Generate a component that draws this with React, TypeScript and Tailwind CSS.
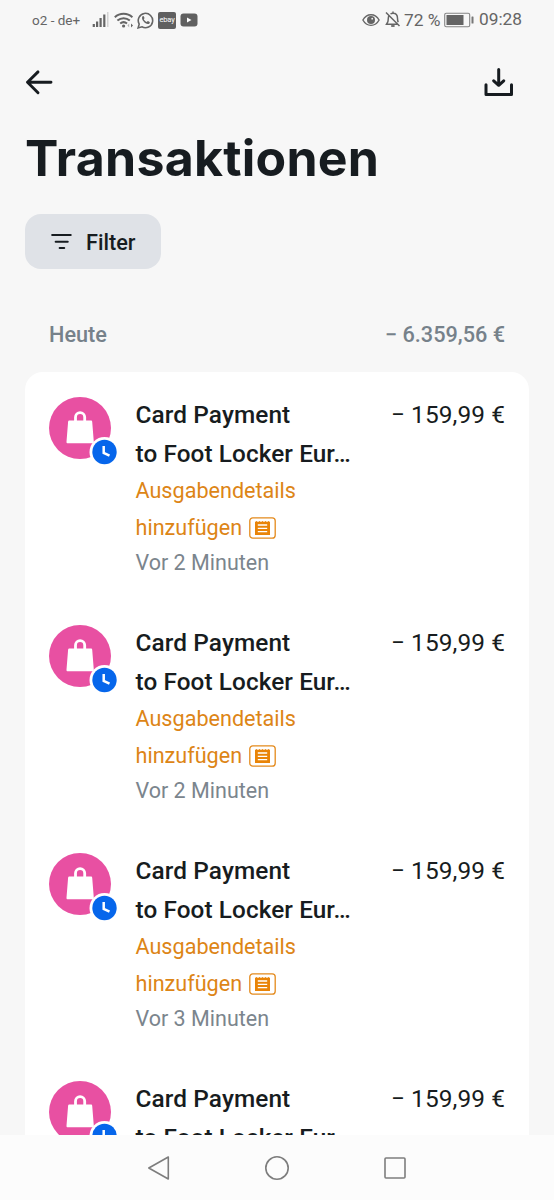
const transactions = [
  { id: 1, merchant: 'Foot Locker Eur…', amount: '159,99', time: 'Vor 2 Minuten' },
  { id: 2, merchant: 'Foot Locker Eur…', amount: '159,99', time: 'Vor 2 Minuten' },
  { id: 3, merchant: 'Foot Locker Eur…', amount: '159,99', time: 'Vor 3 Minuten' },
  { id: 4, merchant: 'Foot Locker Eur…', amount: '159,99', time: 'Vor 3 Minuten' }
];

function StatusBar() {
  return (
    <div className="flex h-10 shrink-0 items-center justify-between pl-8 pr-8 text-[#656565]">
      <div className="flex items-center">
        <span className="w-[60px] whitespace-nowrap text-[13.5px]">o2 - de+</span>
        {/* Signal */}
        <svg width="18" height="16" viewBox="0 0 18 16" fill="currentColor">
          <rect x="0.7" y="12" width="2.2" height="3" />
          <rect x="4" y="9.5" width="2.2" height="5.5" />
          <rect x="7.5" y="6" width="2.2" height="9" />
          <rect x="11.2" y="2.5" width="2.2" height="12.5" />
          <rect x="15" y="0" width="1.5" height="15" fill="#d2d2d2" />
        </svg>
        {/* Wifi */}
        <svg className="ml-1" width="20" height="17" viewBox="0 0 20 17" fill="none" stroke="currentColor" strokeWidth="2">
          <path d="M.8 5.2C5.8.6 13.4.6 18.4 5.2" />
          <path d="M3.4 8.6c3.6-3.2 8.8-3.2 12.4 0" />
          <path d="M6.2 11.6c2-1.7 4.8-1.7 6.8 0" />
          <circle cx="9.6" cy="14" r="1.6" fill="currentColor" stroke="none" />
          <path d="M15.2 11.6v4l-1.8-2z" fill="#b5b5b5" stroke="none" />
          <path d="M17 11.6v4l2-2z" fill="currentColor" stroke="none" />
        </svg>
        {/* WhatsApp */}
        <svg className="ml-[3px]" width="17" height="17" viewBox="0 0 17 17" fill="none" stroke="currentColor" strokeWidth="1.6">
          <path d="M1.1 15.9l1.1-3.8A7.2 7.2 0 1 1 4.9 14.8z" />
          <path d="M5.3 4.6c.6-.8 1.3-.7 1.6 0l.6 1.5c.1.5-.8.9-.6 1.4.6 1.1 1.5 1.9 2.7 2.4.5.2.8-1 1.4-.8l1.6.8c.5.3.2 1.6-.9 2-2.6 1.2-8-4-6.4-7.3z" fill="currentColor" stroke="none" />
        </svg>
        <span className="ml-1 flex h-[17px] w-[18px] items-center justify-center rounded-[2px] bg-[#606060] text-[7.5px] leading-none tracking-[-0.2px] text-white">ebay</span>
        {/* YouTube */}
        <svg className="ml-1" width="18" height="14" viewBox="0 0 18 14">
          <rect x="0.5" y="0.5" width="17" height="13" rx="3" fill="#606060" />
          <path d="M7 4.5v5l4.5-2.5z" fill="#fff" />
        </svg>
      </div>
      <div className="flex items-center">
        {/* Eye */}
        <svg width="18" height="14" viewBox="0 0 18 14" fill="none" stroke="currentColor" strokeWidth="1.4">
          <path d="M.9 7C4.7-.1 13.3-.1 17.1 7 13.3 14.1 4.7 14.1.9 7z" />
          <circle cx="9" cy="7" r="4" fill="currentColor" stroke="none" />
          <circle cx="10.2" cy="5.7" r="0.9" fill="#f7f7f7" stroke="none" />
        </svg>
        {/* Muted bell */}
        <svg className="ml-[5px]" width="16" height="17" viewBox="0 0 16 17" fill="none" stroke="currentColor" strokeWidth="1.5">
          <path d="M1 1.5l13.5 13.5M3.8 4.8C3 6.5 3.4 9.500 2.800 11L1.500 13.200h11M5.500 2.900C6.300 2.500 7 2.300 8 2.300c3 0 4.500 2.200 4.500 5 0 1.700.2 2.900.7 4M8 .6v1.700" />
          <path d="M6.2 15h3.4" strokeWidth="1.8" />
        </svg>
        <span className="ml-[3px] w-[40px] whitespace-nowrap text-[17.4px]">72 %</span>
        {/* Battery */}
        <svg width="30" height="16" viewBox="0 0 30 16">
          <rect x="0.7" y="1.2" width="25" height="13.6" rx="1.5" fill="none" stroke="#858585" strokeWidth="1.1" />
          <rect x="2.5" y="3" width="17" height="10" fill="#646464" />
          <rect x="27.5" y="4.5" width="2" height="7" rx="0.5" fill="#777" />
        </svg>
        <span className="ml-[5px] whitespace-nowrap text-[17.3px]">09:28</span>
      </div>
    </div>
  );
}

function CategoryIcon() {
  return (
    <svg width="70" height="70" viewBox="0 0 70 70">
      <circle cx="31" cy="31" r="31" fill="#e850a2" />
      <path d="M20.5 23.5h21.4c.8 0 1.2.4 1.3 1.2l1.6 20.1c.1 1-.4 1.500-1.400 1.500H18.900c-1 0-1.500-.5-1.400-1.500l1.600-20.100c.1-.8.600-1.200 1.400-1.200z" fill="#fff" />
      <path d="M26.5 25v-4.8a4.6 4.6 0 0 1 9.2 0V25" fill="none" stroke="#fff" strokeWidth="2.8" />
      <circle cx="55.5" cy="55" r="15" fill="#fff" />
      <circle cx="55.5" cy="55" r="12.2" fill="#0666eb" />
      <path d="M54.7 49v7l5.8 2.7" fill="none" stroke="#fff" strokeWidth="2.5" />
    </svg>
  );
}

function ReceiptIcon() {
  return (
    <svg className="ml-[7px]" width="27" height="22" viewBox="0 0 27 22">
      <rect x="0.8" y="0.8" width="25.4" height="20.4" rx="3" fill="none" stroke="#e48a1c" strokeWidth="1.3" />
      <path d="M6 5l1.5-1L9 5l1.5-1L12 5l1.5-1L15 5l1.5-1L18 5l1.5-1L21 5v13H6z" fill="#e98407" />
      <path d="M8.8 8h9.4M8.8 11.3h9.4M8.8 14.6h9.4" stroke="#fff" strokeWidth="1.3" />
    </svg>
  );
}

export default function App() {
  return (
    <div className="flex h-[1200px] w-[554px] flex-col overflow-hidden bg-[#f7f7f7] font-['Roboto',sans-serif] text-[#171c20]">
      <StatusBar />

      {/* Header */}
      <header className="flex h-[84px] shrink-0 items-center justify-between pl-[25px] pr-10">
        <svg width="29" height="26" viewBox="0 0 29 26" fill="none" stroke="currentColor" strokeWidth="2.9" strokeLinecap="round" strokeLinejoin="round">
          <path d="M26 13.3H2.5M13 2.9L2.500 13.300 13 23.700" />
        </svg>
        <svg width="30" height="30" viewBox="0 0 30 30" fill="none" stroke="currentColor" strokeWidth="3" strokeLinecap="round" strokeLinejoin="round">
          <path d="M2 17.8v9.7h25.5v-9.7M14.7 2.5v15.500M9.700 13.800l5 4.500 5-4.500" />
        </svg>
      </header>

      <h1 className="flex h-[66px] shrink-0 items-center whitespace-nowrap pl-[25px] pt-0.5 font-['Inter',sans-serif] text-[50px] font-bold tracking-[0.25px]">
        Transaktionen
      </h1>

      <button className="ml-[25px] mt-6 flex h-[55px] w-[136px] shrink-0 items-center rounded-[16px] bg-[#dfe2e7] pl-6">
        <svg width="24" height="20" viewBox="0 0 24 20" stroke="currentColor" strokeWidth="2.1" strokeLinecap="round">
          <path d="M3.2 3h18.5M6.700 9.700h12M10.700 16h4.500" />
        </svg>
        <span className="ml-[13px] pt-[3px] text-[21.7px] font-medium">Filter</span>
      </button>

      {/* Day summary */}
      <div className="mt-[46px] flex h-10 shrink-0 items-center justify-between pl-[49px] pr-[49px] text-[21.7px] font-medium text-[#76818a]">
        <span>Heute</span>
        <span>− 6.359,56 €</span>
      </div>

      {/* Transactions */}
      <main className="mx-[25px] mt-[17px] min-h-0 flex-1 overflow-hidden rounded-t-[18px] bg-white pt-[24px]">
        {transactions.map((item) => (
          <div key={item.id} className="flex h-[228px] px-6">
            <div className="w-[86.5px] shrink-0 pt-px">
              <CategoryIcon />
            </div>
            <div className="flex-1 whitespace-nowrap">
              <p className="flex h-[38px] items-center justify-between text-[24.4px] tracking-[0.1px]">
                <span className="font-medium">Card Payment</span>
                <span>− {item.amount} €</span>
              </p>
              <p className="flex h-[39px] items-center pt-px text-[24.3px] font-medium tracking-[0.1px]">to {item.merchant}</p>
              <p className="flex h-[37px] items-center text-[21.6px] text-[#dd8516]">Ausgabendetails</p>
              <p className="flex h-[36px] items-center text-[21.6px] text-[#dd8516]">
                hinzufügen
                <ReceiptIcon />
              </p>
              <p className="flex h-[34px] items-center text-[21.5px] text-[#7b858d]">{item.time}</p>
            </div>
          </div>
        ))}
      </main>

      {/* System navigation */}
      <nav className="flex h-[65px] shrink-0 items-center justify-between bg-[#fcfcfc] pl-[147px] pr-[147px] text-[#7d7d7d]">
        <svg width="24" height="26" viewBox="0 0 24 26" fill="none" stroke="currentColor" strokeWidth="1.6" strokeLinejoin="round">
          <path d="M21.3 2v22L1.8 13z" />
        </svg>
        <svg width="26" height="26" viewBox="0 0 26 26" fill="none" stroke="currentColor" strokeWidth="1.6">
          <circle cx="13" cy="13" r="11.2" />
        </svg>
        <svg width="24" height="24" viewBox="0 0 24 24" fill="none" stroke="currentColor" strokeWidth="1.6">
          <rect x="2" y="2" width="20" height="20" rx="1" />
        </svg>
      </nav>
    </div>
  );
}
